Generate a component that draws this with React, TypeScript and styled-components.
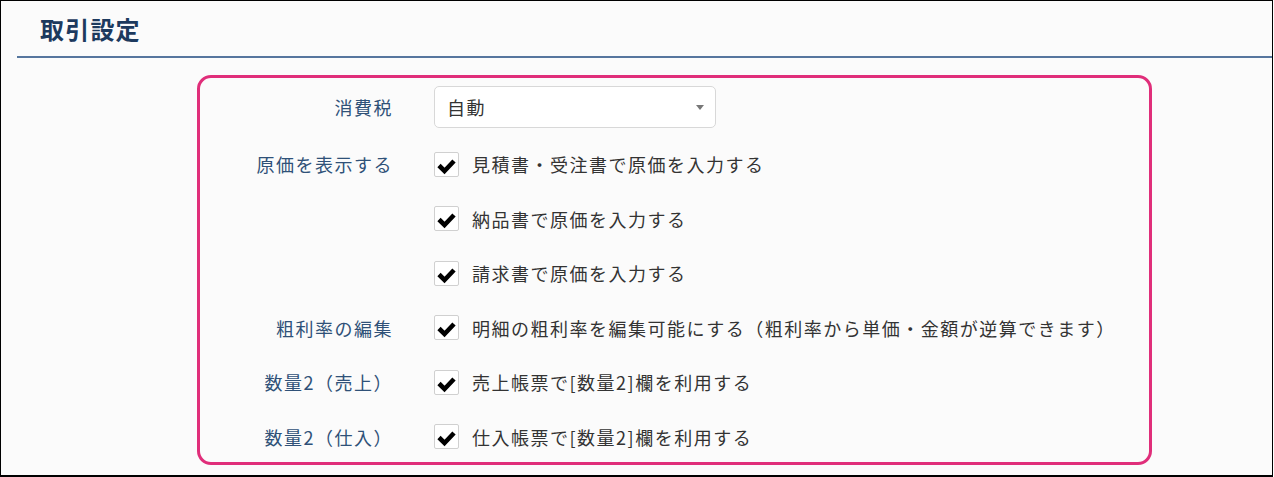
import React from "react";
import styled, { createGlobalStyle } from "styled-components";

const Global = createGlobalStyle`
  html, body { margin: 0; padding: 0; background: #ffffff; }
  body { font-family: "Noto Sans CJK JP", "Noto Sans", sans-serif; }
  * { box-sizing: border-box; }
`;

const Frame = styled.div`
  width: 1273px;
  height: 477px;
  border: 1px solid #000;
  border-bottom-width: 2px;
  background: #fbfbfb;
  overflow: hidden;
`;

const Header = styled.div`
  margin-left: 16px;
  padding: 10px 0 9px 23px;
  border-bottom: 2px solid #56769e;
`;

const Title = styled.h1`
  margin: 0;
  font-size: 24px;
  line-height: 36px;
  font-weight: 700;
  letter-spacing: 1.2px;
  color: #1d3a5e;
`;

const Panel = styled.div`
  margin: 17px 0 0 196px;
  width: 955px;
  border: 3px solid #e02e7a;
  border-radius: 14px;
  padding: 8px 0 0 0;
  height: 390px;
`;

const Row = styled.div<{ $h: number }>`
  display: grid;
  grid-template-columns: 193px 1fr;
  column-gap: 41px;
  align-items: center;
  height: ${(p) => p.$h}px;
`;

const Label = styled.div`
  text-align: right;
  font-size: 18px;
  letter-spacing: 1.5px;
  color: #2f5178;
  white-space: nowrap;
`;

const Select = styled.div`
  width: 282px;
  height: 42px;
  background: #fff;
  border: 1px solid #d8d8d8;
  border-radius: 5px;
  display: flex;
  align-items: center;
  justify-content: space-between;
  padding: 0 11px 0 12px;
  font-size: 18px;
  letter-spacing: 1.5px;
  color: #333;
`;

const Caret = styled.span`
  width: 0;
  height: 0;
  border-left: 4.5px solid transparent;
  border-right: 4.5px solid transparent;
  border-top: 5px solid #777;
`;

const CheckLine = styled.label`
  display: flex;
  align-items: center;
  gap: 13px;
  font-size: 18px;
  letter-spacing: 1.5px;
  color: #333;
  white-space: nowrap;
`;

const Box = styled.span`
  width: 25px;
  height: 25px;
  flex: none;
  background: #fff;
  border: 1px solid #d0d0d0;
  border-radius: 2px;
  display: flex;
  align-items: center;
  justify-content: center;
`;

const Spacer = styled.div`
  height: 9px;
`;

const Check = () => (
  <Box>
    <svg width="23" height="23" viewBox="0 0 23 23">
      <polyline
        points="4,12.5 9.5,18 19,8"
        fill="none"
        stroke="#000"
        strokeWidth="4.6"
        strokeLinejoin="miter"
        strokeLinecap="butt"
      />
    </svg>
  </Box>
);

const rows: { label: string; text: string }[] = [
  { label: "原価を表示する", text: "見積書・受注書で原価を入力する" },
  { label: "", text: "納品書で原価を入力する" },
  { label: "", text: "請求書で原価を入力する" },
  {
    label: "粗利率の編集",
    text: "明細の粗利率を編集可能にする（粗利率から単価・金額が逆算できます）",
  },
  { label: "数量2（売上）", text: "売上帳票で[数量2]欄を利用する" },
  { label: "数量2（仕入）", text: "仕入帳票で[数量2]欄を利用する" },
];

export default function App() {
  return (
    <>
      <Global />
      <Frame>
        <Header>
          <Title>取引設定</Title>
        </Header>
        <Panel>
          <Row $h={42}>
            <Label>消費税</Label>
            <Select>
              <span>自動</span>
              <Caret />
            </Select>
          </Row>
          <Spacer />
          {rows.map((r, i) => (
            <Row key={i} $h={54.5}>
              <Label>{r.label}</Label>
              <CheckLine>
                <Check />
                <span>{r.text}</span>
              </CheckLine>
            </Row>
          ))}
        </Panel>
      </Frame>
    </>
  );
}
